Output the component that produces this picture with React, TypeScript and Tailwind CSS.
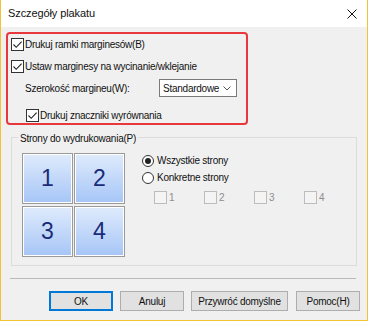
import React from "react";

const Check = ({ checked = false, disabled = false }: { checked?: boolean; disabled?: boolean }) => (
  <span
    className={
      "flex h-[13px] w-[13px] shrink-0 items-center justify-center border " +
      (disabled ? "border-[#bcbcbc] bg-[#f4f4f4]" : "border-[#333333] bg-white")
    }
  >
    {checked && (
      <svg width="11" height="11" viewBox="0 0 11 11">
        <path d="M1.5 5.5 L4.2 8.3 L9.6 2.6" fill="none" stroke="#222" strokeWidth="1.1" />
      </svg>
    )}
  </span>
);

const Radio = ({ on = false }: { on?: boolean }) => (
  <span className="flex h-[12px] w-[12px] shrink-0 items-center justify-center rounded-full border border-[#333333] bg-white">
    {on && <span className="h-[6px] w-[6px] rounded-full bg-[#222]" />}
  </span>
);

const Tile = ({ n }: { n: string }) => (
  <div className="flex h-[51px] w-[51px] items-center justify-center border border-[#9a9a9a] bg-gradient-to-b from-[#dfebfc] to-[#a6c5f6] shadow-[inset_0_0_0_1px_#ffffff]">
    <span className="text-[23px] leading-none tracking-normal text-[#1a2b78]">{n}</span>
  </div>
);

const Btn = ({ label, primary = false, w }: { label: string; primary?: boolean; w: string }) => (
  <button
    className={
      "flex h-[20px] items-center justify-center whitespace-nowrap bg-[#e1e1e1] text-[#111] " +
      w +
      (primary ? " border-2 border-[#0078d7]" : " border border-[#adadad]")
    }
  >
    {label}
  </button>
);

export default function App() {
  return (
    <div
      className="flex h-[321px] w-[368px] flex-col border-x border-b border-[#f4c430] bg-[#f0f0f0] text-[10px] tracking-[-0.25px] text-[#111]"
      style={{ fontFamily: '"Liberation Sans", Arial, sans-serif' }}
    >
      <div className="flex h-[27px] shrink-0 items-center justify-between bg-white pl-[7px] pr-[10px]">
        <span className="text-[11px] tracking-[-0.1px] text-[#111]">Szczegóły plakatu</span>
        <svg width="10" height="10" viewBox="0 0 10 10">
          <path d="M0.5 0.5 L9.5 9.5 M9.5 0.5 L0.5 9.5" stroke="#111" strokeWidth="1" />
        </svg>
      </div>

      <div className="ml-[5px] mt-[5px] flex h-[93px] w-[242px] flex-col rounded-[4px] border-2 border-[#e8383d] pl-[3px] pt-[3px]">
        <div className="flex h-[15px] items-center gap-[1px]">
          <Check checked />
          <span>Drukuj ramki marginesów(B)</span>
        </div>
        <div className="mt-[7px] flex h-[15px] items-center gap-[1px]">
          <Check checked />
          <span>Ustaw marginesy na wycinanie/wklejanie</span>
        </div>
        <div className="mt-[5px] flex h-[18px] items-center pl-[14px]">
          <span className="w-[134px]">Szerokość margineu(W):</span>
          <div className="flex h-[18px] w-[78px] items-center justify-between border border-[#7a7a7a] bg-white pl-[3px] pr-[5px]">
            <span>Standardowe</span>
            <svg width="8" height="5" viewBox="0 0 8 5">
              <path d="M0.5 0.5 L4 4 L7.5 0.5" fill="none" stroke="#555" strokeWidth="1" />
            </svg>
          </div>
        </div>
        <div className="mt-[11px] flex h-[15px] items-center gap-[1px] pl-[15px]">
          <Check checked />
          <span>Drukuj znaczniki wyrównania</span>
        </div>
      </div>

      <div className="relative ml-[10px] mt-[12px] h-[129px] w-[346px] border border-[#dcdcdc]">
        <span className="absolute -top-[7px] left-[6px] bg-[#f0f0f0] px-[2px]">Strony do wydrukowania(P)</span>
        <div className="flex pl-[10px] pt-[15px]">
          <div className="grid grid-cols-[51px_51px] gap-[1px]">
            <Tile n="1" />
            <Tile n="2" />
            <div className="mt-[1px]"><Tile n="3" /></div>
            <div className="mt-[1px]"><Tile n="4" /></div>
          </div>
          <div className="ml-[17px] flex flex-col pt-[1px]">
            <div className="flex h-[13px] items-center gap-[3px]">
              <Radio on />
              <span>Wszystkie strony</span>
            </div>
            <div className="mt-[4px] flex h-[13px] items-center gap-[3px]">
              <Radio />
              <span>Konkretne strony</span>
            </div>
            <div className="mt-[6px] flex pl-[12px]">
              {["1", "2", "3", "4"].map((n) => (
                <div key={n} className="flex w-[50px] items-center gap-[2px] text-[#8d8d8d]">
                  <Check disabled />
                  <span>{n}</span>
                </div>
              ))}
            </div>
          </div>
        </div>
      </div>

      <div className="ml-[9px] mt-[12px] h-px w-[346px] bg-[#b9b9b9]" />

      <div className="ml-[48px] mt-[12px] flex gap-[7px]">
        <Btn label="OK" primary w="w-[64px]" />
        <Btn label="Anuluj" w="w-[64px]" />
        <Btn label="Przywróć domyślne" w="w-[97px]" />
        <div className="ml-[1px]">
          <Btn label="Pomoc(H)" w="w-[64px]" />
        </div>
      </div>
    </div>
  );
}
